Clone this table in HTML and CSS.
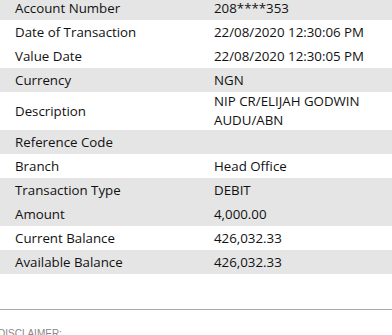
FILE: index.html
```html
<!DOCTYPE html>
<html>
<head>
<meta charset="utf-8">
<link rel="stylesheet" href="styles.css">
</head>
<body>
<div class="page">
  <div class="details">
    <div class="row shade"><div class="label">Account Number</div><div class="value">208****353</div></div>
    <div class="row"><div class="label">Date of Transaction</div><div class="value">22/08/2020 12:30:06 PM</div></div>
    <div class="row"><div class="label">Value Date</div><div class="value">22/08/2020 12:30:05 PM</div></div>
    <div class="row shade"><div class="label">Currency</div><div class="value">NGN</div></div>
    <div class="row tall"><div class="label">Description</div><div class="value">NIP CR/ELIJAH GODWIN AUDU/ABN</div></div>
    <div class="row shade"><div class="label">Reference Code</div><div class="value"></div></div>
    <div class="row"><div class="label">Branch</div><div class="value">Head Office</div></div>
    <div class="row shade"><div class="label">Transaction Type</div><div class="value">DEBIT</div></div>
    <div class="row shade"><div class="label">Amount</div><div class="value">4,000.00</div></div>
    <div class="row"><div class="label">Current Balance</div><div class="value">426,032.33</div></div>
    <div class="row shade"><div class="label">Available Balance</div><div class="value">426,032.33</div></div>
  </div>
  <hr class="rule">
  <div class="disclaimer">DISCLAIMER:</div>
</div>
</body>
</html>
```
FILE: styles.css
```css
html, body {
  margin: 0;
  padding: 0;
  background: #ffffff;
}
.page {
  margin-top: -4px;
  font-family: "Open Sans", "Noto Sans", sans-serif;
  font-size: 13.3px;
  color: #111111;
}
.details {
  display: flex;
  flex-direction: column;
}
.row {
  display: grid;
  grid-template-columns: 214px 1fr;
  align-items: center;
  min-height: 24px;
  line-height: 19px;
}
.row.tall {
  min-height: 38px;
}
.row.shade {
  background: #e5e5e5;
}
.label {
  padding-left: 15px;
}
.value {
  padding-right: 12px;
}
.rule {
  margin: 35px 0 0 0;
  border: 0;
  border-top: 1px solid #aaaaaa;
  height: 0;
}
.disclaimer {
  margin: 18px 0 0 -2px;
  font-family: "Liberation Sans", Arial, sans-serif;
  font-size: 10px;
  color: #888888;
}
```
